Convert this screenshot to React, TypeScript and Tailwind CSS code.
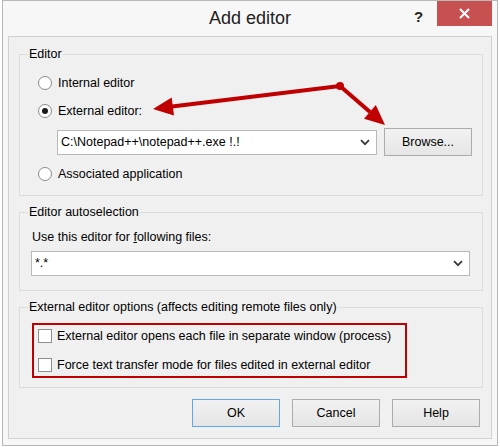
import React from "react";

function Radio({ checked, label }: { checked?: boolean; label: string }) {
  return (
    <div className="flex h-[20px] items-center">
      <span className="flex h-[14px] w-[14px] items-center justify-center rounded-full border border-[#8a8a8a] bg-white">
        {checked && <span className="h-[6px] w-[6px] rounded-full bg-[#1a1a1a]" />}
      </span>
      <span className="ml-[6px]">{label}</span>
    </div>
  );
}

function Check({ label }: { label: string }) {
  return (
    <div className="flex h-[20px] items-center">
      <span className="h-[14px] w-[14px] border border-[#8f8f8f] bg-white" />
      <span className="ml-[5px]">{label}</span>
    </div>
  );
}

function Chevron() {
  return (
    <svg width="10" height="7" viewBox="0 0 10 7" className="shrink-0">
      <path d="M1 1.2 L5 5.2 L9 1.2" fill="none" stroke="#3a3a3a" strokeWidth="1.8" />
    </svg>
  );
}

function Combo({ value, className }: { value: string; className: string }) {
  return (
    <div
      className={
        "flex h-[25px] items-center border border-[#b9b9b9] bg-white pl-[3px] pr-[6px] " + className
      }
    >
      <span className="flex-1 truncate">{value}</span>
      <Chevron />
    </div>
  );
}

function Group({
  title,
  className,
  children,
}: {
  title: string;
  className: string;
  children: React.ReactNode;
}) {
  return (
    <div className={"flex flex-col border border-[#dcdcdc] " + className}>
      <div className="-mt-[8px] ml-[8px] h-[14px] self-start bg-[#f0f0f0] px-[1px] leading-[14px]">
        {title}
      </div>
      {children}
    </div>
  );
}

function Button({ label, focused }: { label: string; focused?: boolean }) {
  return (
    <div
      className={
        focused
          ? "flex h-[28px] w-[88px] items-center justify-center border border-[#5ea6e8] bg-gradient-to-b from-[#f2f2f2] to-[#e5e5e5]"
          : "flex h-[28px] w-[88px] items-center justify-center border border-[#acacac] bg-gradient-to-b from-[#f2f2f2] to-[#e5e5e5]"
      }
    >
      {label}
    </div>
  );
}

export default function App() {
  return (
    <div className="relative h-[447px] w-[500px] overflow-hidden bg-white font-['Liberation_Sans',sans-serif] text-[12.5px] text-black">
      <div className="ml-[2px] flex h-[446px] w-[496px] flex-col border border-[#b8b8b8] bg-[#f7f7f7]">
        {/* title bar */}
        <div className="relative flex h-[35px] items-center justify-center">
          <span className="pb-[1px] text-[18px] text-[#222]">Add editor</span>
          <span className="absolute left-[411px] top-[5px] text-[15px] font-bold text-[#222]">?</span>
          <div className="absolute left-[434px] top-0 flex h-[25px] w-[55px] items-center justify-center bg-[#c75050]">
            <svg width="11" height="11" viewBox="0 0 11 11">
              <path d="M1 1 L10 10 M10 1 L1 10" stroke="#fff" strokeWidth="2" />
            </svg>
          </div>
        </div>

        {/* client area */}
        <div className="mx-[5px] flex h-[403px] flex-col border border-[#d0d0d0] bg-[#f0f0f0]">
          <Group title="Editor" className="ml-[10px] mr-[8px] mt-[17px] pb-[11px]">
            <div className="mt-[12px] pl-[18px]">
              <Radio label="Internal editor" />
            </div>
            <div className="mt-[8px] pl-[18px]">
              <Radio checked label="External editor:" />
            </div>
            <div className="mt-[7px] flex h-[28px] items-center pl-[37px]">
              <Combo value="C:\Notepad++\notepad++.exe !.!" className="w-[320px]" />
              <div className="ml-[7px]">
                <Button label="Browse..." />
              </div>
            </div>
            <div className="mt-[8px] pl-[18px]">
              <Radio label="Associated application" />
            </div>
          </Group>

          <Group title="Editor autoselection" className="ml-[10px] mr-[8px] mt-[16px] pb-[14px]">
            <div className="mt-[10px] h-[16px] pl-[12px] leading-[16px]">
              Use this editor for <span className="underline">f</span>ollowing files:
            </div>
            <Combo value="*.*" className="ml-[11px] mt-[6px] w-[439px]" />
          </Group>

          <Group
            title="External editor options (affects editing remote files only)"
            className="ml-[10px] mr-[8px] mt-[16px] pb-[9px]"
          >
            <div className="ml-[12px] mt-[9px] flex w-[375px] flex-col border-2 border-[#c00000] pl-[4px] pt-[1px] pb-[1px]">
              <Check label="External editor opens each file in separate window (process)" />
              <div className="mt-[9px]">
                <Check label="Force text transfer mode for files edited in external editor" />
              </div>
            </div>
          </Group>

          <div className="mt-[11px] flex justify-end gap-[12px] pr-[11px]">
            <Button label="OK" focused />
            <Button label="Cancel" />
            <Button label="Help" />
          </div>
        </div>
      </div>

      {/* annotation arrows */}
      <svg className="pointer-events-none absolute left-0 top-0" width="500" height="447" viewBox="0 0 500 447">
        <g fill="#c00000" stroke="#c00000">
          <line x1="340" y1="86" x2="172" y2="106.6" strokeWidth="4" />
          <polygon points="153,109 174,115.5 171.7,97.6" stroke="none" />
          <line x1="340" y1="86" x2="370" y2="112" strokeWidth="4" />
          <polygon points="385,125 364,118.7 375.8,105.1" stroke="none" />
          <circle cx="340" cy="86" r="4" stroke="none" />
        </g>
      </svg>
    </div>
  );
}
